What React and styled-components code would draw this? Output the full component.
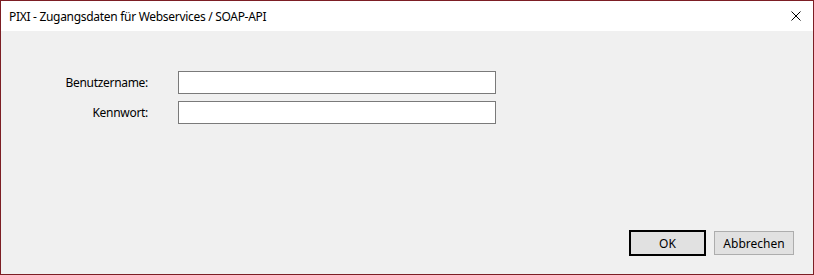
import styled, { createGlobalStyle } from "styled-components";

const GlobalStyle = createGlobalStyle`
  html, body {
    margin: 0;
    padding: 0;
    background: #ffffff;
  }
  * {
    box-sizing: border-box;
  }
`;

function App() {
  return (
    <>
      <GlobalStyle />
      <Window>
        <TitleBar>
          <Title>PIXI - Zugangsdaten für Webservices / SOAP-API</Title>
          <CloseButton aria-label="Schließen">
            <svg width="10" height="10" viewBox="0 0 10 10">
              <path d="M0.5 0.5 L9.5 9.5 M9.5 0.5 L0.5 9.5" stroke="#000" strokeWidth="1" fill="none" />
            </svg>
          </CloseButton>
        </TitleBar>
        <Body>
          <Form>
            <Label htmlFor="user">Benutzername:</Label>
            <Input id="user" type="text" />
            <Label htmlFor="pass">Kennwort:</Label>
            <Input id="pass" type="password" />
          </Form>
          <Footer>
            <Button $default>OK</Button>
            <Button>Abbrechen</Button>
          </Footer>
        </Body>
      </Window>
    </>
  );
}

const Window = styled.div`
  width: 814px;
  height: 275px;
  border: 1px solid #7c1e24;
  display: flex;
  flex-direction: column;
  font-family: "Segoe UI", "Noto Sans", sans-serif;
  font-size: 12px;
  letter-spacing: -0.3px;
  color: #000;
`;

const TitleBar = styled.div`
  height: 30px;
  background: #ffffff;
  display: flex;
  align-items: center;
  justify-content: space-between;
  padding-left: 8px;
  flex-shrink: 0;
`;

const Title = styled.span`
  font-size: 12px;
  color: #000;
`;

const CloseButton = styled.button`
  width: 30px;
  height: 30px;
  border: none;
  background: transparent;
  display: flex;
  align-items: center;
  justify-content: center;
  padding: 0 4px 0 0;
`;

const Body = styled.div`
  flex: 1;
  background: #f0f0f0;
  display: flex;
  flex-direction: column;
  justify-content: space-between;
  padding: 40px 19px 18px 0;
`;

const Form = styled.div`
  display: grid;
  grid-template-columns: 147px 318px;
  column-gap: 30px;
  row-gap: 7px;
  align-items: center;
`;

const Label = styled.label`
  text-align: right;
`;

const Input = styled.input`
  height: 23px;
  border: 1px solid #7a7a7a;
  background: #ffffff;
  padding: 0 4px;
  font: inherit;
  outline: none;
`;

const Footer = styled.div`
  display: flex;
  justify-content: flex-end;
  align-items: center;
  gap: 8px;
`;

const Button = styled.button`
  width: ${(p) => (p.$default ? "77px" : "80px")};
  height: ${(p) => (p.$default ? "26px" : "24px")};
  border: ${(p) => (p.$default ? "2px solid #000" : "1px solid #adadad")};
  background: #e1e1e1;
  font: inherit;
  color: #000;
  padding: 0;
  cursor: default;
`;

export default App;
